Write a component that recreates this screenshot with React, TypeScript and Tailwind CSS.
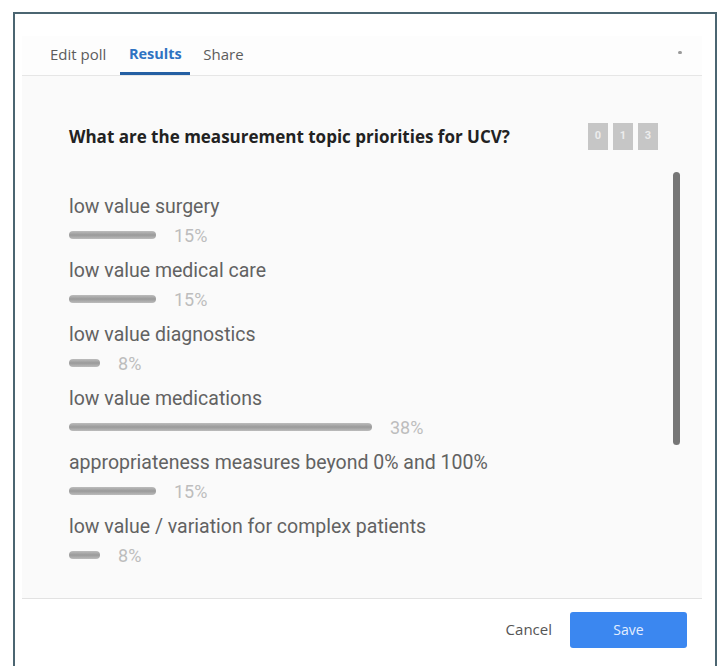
import React from "react";

type Option = { label: string; pct: number; bar: number };

const options: Option[] = [
  { label: "low value surgery", pct: 15, bar: 87 },
  { label: "low value medical care", pct: 15, bar: 87 },
  { label: "low value diagnostics", pct: 8, bar: 31 },
  { label: "low value medications", pct: 38, bar: 303 },
  { label: "appropriateness measures beyond 0% and 100%", pct: 15, bar: 87 },
  { label: "low value / variation for complex patients", pct: 8, bar: 31 },
];

function Tabs() {
  return (
    <div className="flex h-[40px] items-stretch border-b border-[#e6e6e6] bg-[#fdfdfd] pl-[28px] pr-[20px] font-['Open_Sans',sans-serif] text-[15px]">
      <div className="flex items-center border-b-[3px] border-transparent text-[#5c5c5c]">Edit poll</div>
      <div className="ml-[14px] flex w-[70px] items-center justify-center border-b-[3px] border-[#245fa3] text-[14.5px] font-bold text-[#2f73c2]">
        Results
      </div>
      <div className="ml-[13px] flex items-center border-b-[3px] border-transparent text-[#5c5c5c]">Share</div>
      <div className="ml-auto mt-[15px] h-[3px] w-[4px] rounded-full bg-[#9a9a9a]" />
    </div>
  );
}

function ResultRow({ option }: { option: Option }) {
  return (
    <div className="mb-[8px]">
      <div className="text-[19.5px] leading-[28px] text-[#626262]">{option.label}</div>
      <div className="flex h-[28px] items-center">
        <div
          className="h-[8px] rounded-full bg-gradient-to-b from-[#bcbcbc] via-[#9a9a9a] to-[#bcbcbc]"
          style={{ width: option.bar }}
        />
        <span className="ml-[18px] text-[18px] text-[#bdbdbd]">{option.pct}%</span>
      </div>
    </div>
  );
}

export default function App() {
  return (
    <div className="h-[666px] w-[719px] overflow-hidden bg-white pl-[13px] pt-[12px]">
      <div className="h-[700px] w-[704px] border-2 border-[#4b6571] pl-[7px] pr-[13px] pt-[22px]">
        <div className="flex h-[680px] flex-col bg-white font-['Roboto',sans-serif]">
          <Tabs />

          <div className="h-[522px] bg-[#fafafa]">
            <div className="flex items-center pl-[47px] pr-[44px] pt-[47px]">
              <h2 className="flex-1 font-['Open_Sans',sans-serif] text-[17px] font-bold text-[#222]">
                What are the measurement topic priorities for UCV?
              </h2>
              <div className="flex gap-[5px]">
                {["0", "1", "3"].map((c) => (
                  <div
                    key={c}
                    className="flex h-[27px] w-[20px] items-center justify-center bg-[#c6c6c6] text-[11px] font-bold text-[#ececec]"
                  >
                    {c}
                  </div>
                ))}
              </div>
            </div>

            <div className="mt-[20px] flex pl-[47px] pr-[22px]">
              <div className="flex-1 pt-[23px]">
                {options.map((o) => (
                  <ResultRow key={o.label} option={o} />
                ))}
              </div>
              <div className="mt-[2px] h-[273px] w-[7px] rounded-full bg-[#767676]" />
            </div>
          </div>

          <div className="flex h-[62px] items-center justify-end border-t border-[#e2e2e2] pr-[15px]">
            <button className="font-['Open_Sans',sans-serif] text-[15px] text-[#555]">Cancel</button>
            <button className="ml-[18px] h-[36px] w-[117px] rounded-[3px] bg-[#3b87f0] font-['Open_Sans',sans-serif] text-[14px] text-[#e3eeff]">
              Save
            </button>
          </div>
        </div>
      </div>
    </div>
  );
}
